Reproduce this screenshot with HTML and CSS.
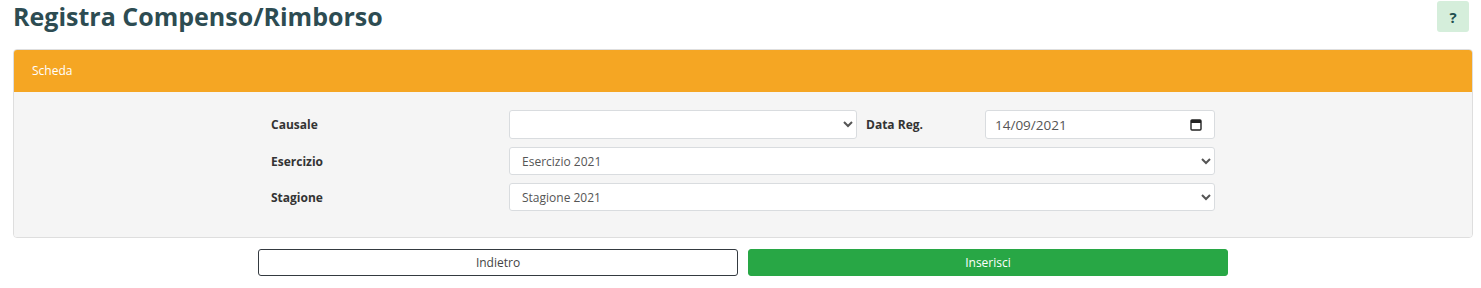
FILE: index.html
```html
<!DOCTYPE html>
<html lang="it">
<head>
    <meta charset="UTF-8">
    <title>Registra Compenso/Rimborso</title>
    <link rel="stylesheet" href="styles.css">
</head>
<body>
    <div class="page-head">
        <h1>Registra Compenso/Rimborso</h1>
        <button class="help-btn">?</button>
    </div>

    <div class="card">
        <div class="card-header">Scheda</div>
        <div class="card-body">
            <div class="form-area">
                <div class="form-row">
                    <label class="lbl">Causale</label>
                    <select class="ctl ctl-short"><option></option></select>
                    <label class="lbl lbl-mid">Data Reg.</label>
                    <div class="date-wrap">
                        <input class="ctl ctl-date" type="text" value="14/09/2021">
                        <svg class="cal-icon" width="12" height="13" viewBox="0 0 12 13">
                            <rect x="1" y="2" width="10" height="10" rx="1" fill="none" stroke="#222" stroke-width="1.4"/>
                            <rect x="1" y="2" width="10" height="3" fill="#222"/>
                        </svg>
                    </div>
                </div>
                <div class="form-row">
                    <label class="lbl">Esercizio</label>
                    <select class="ctl ctl-wide"><option>Esercizio 2021</option></select>
                </div>
                <div class="form-row">
                    <label class="lbl">Stagione</label>
                    <select class="ctl ctl-wide"><option>Stagione 2021</option></select>
                </div>
            </div>
        </div>
    </div>

    <div class="actions">
        <button class="btn btn-back">Indietro</button>
        <button class="btn btn-save">Inserisci</button>
    </div>
</body>
</html>
```

FILE: styles.css
```css
body {
    margin: 0;
    font-family: "Open Sans", Arial, sans-serif;
    background: #fff;
    color: #333;
}
.page-head {
    display: flex;
    justify-content: space-between;
    align-items: flex-start;
    padding: 0 12px 0 13px;
    height: 49px;
}
h1 {
    margin: 0;
    font-size: 25px;
    font-weight: 700;
    line-height: 32px;
    color: #2d4c52;
}
.help-btn {
    margin-top: 1px;
    width: 32px;
    height: 31px;
    border: none;
    border-radius: 3px;
    background: #d5eedb;
    color: #1f4f4f;
    font-family: "Open Sans", Arial, sans-serif;
    font-weight: 700;
    font-size: 15px;
    padding: 0;
}
.card {
    margin: 0 8px 0 13px;
    border: 1px solid #dedede;
    border-radius: 4px;
    overflow: hidden;
}
.card-header {
    background: #f5a623;
    color: #fff;
    font-size: 12px;
    height: 42px;
    line-height: 42px;
    padding-left: 18px;
}
.card-body {
    background: #f5f5f5;
    padding: 18px 0 26px;
}
.form-area {
    width: 944px;
    margin: 0 auto;
    display: flex;
    flex-direction: column;
    gap: 8px;
}
.form-row {
    display: flex;
    align-items: center;
}
.lbl {
    width: 238px;
    font-size: 12px;
    font-weight: 700;
    color: #333;
}
.lbl-mid {
    width: 119px;
    margin-left: 9px;
}
.ctl {
    height: 29px;
    box-sizing: border-box;
    border: 1px solid #d9dcdf;
    border-radius: 3px;
    background: #fff;
    font-family: "Open Sans", Arial, sans-serif;
    font-size: 12px;
    color: #555;
    padding: 0 8px;
}
.ctl-short {
    width: 348px;
}
.date-wrap {
    position: relative;
    width: 230px;
}
.ctl-date {
    width: 230px;
    padding-left: 9px;
    font-size: 13.5px;
}
.cal-icon {
    position: absolute;
    right: 13px;
    top: 8px;
}
.ctl-wide {
    width: 706px;
    height: 28px;
}
.actions {
    display: flex;
    justify-content: center;
    gap: 10px;
    margin-top: 11px;
    padding-left: 5px;
}
.btn {
    width: 480px;
    height: 27px;
    border-radius: 3px;
    font-family: "Open Sans", Arial, sans-serif;
    font-size: 12px;
    cursor: pointer;
}
.btn-back {
    background: #fff;
    border: 1px solid #343a40;
    color: #444;
}
.btn-save {
    background: #28a745;
    border: 1px solid #28a745;
    color: #fff;
}
```
